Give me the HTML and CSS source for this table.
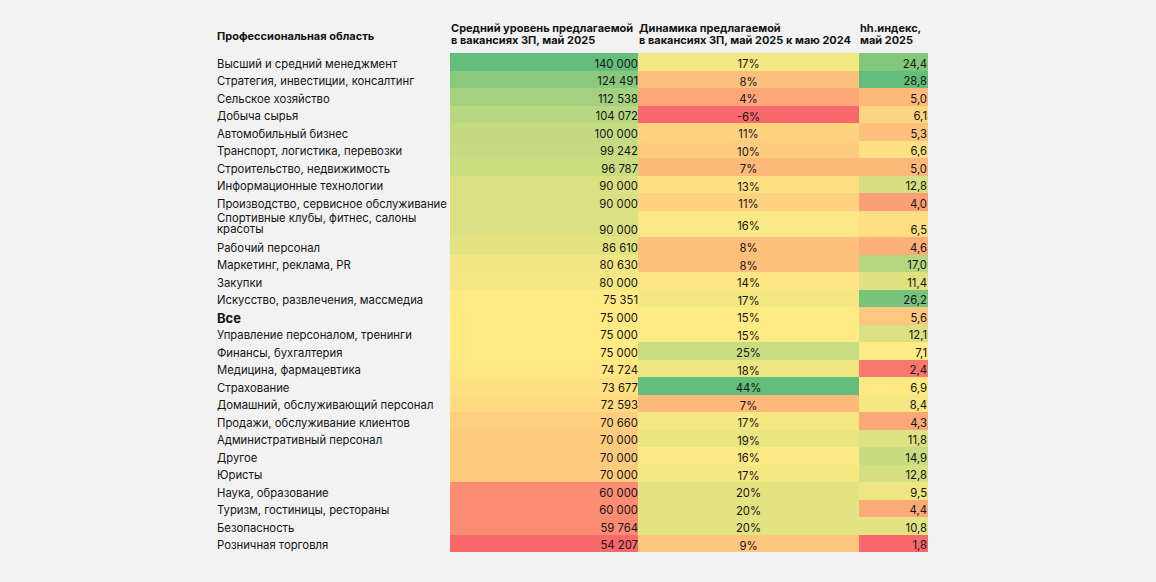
FILE: index.html
```html
<!DOCTYPE html>
<html lang="ru">
<head>
<meta charset="utf-8">
<title>Зарплаты и hh.индекс</title>
<link rel="stylesheet" href="styles.css">
</head>
<body>
<div class="page">
  <div class="table">
    <div class="row head">
      <div class="c name">Профессиональная область</div>
      <div class="c hcol">Средний уровень предлагаемой<br>в вакансиях ЗП, май 2025</div>
      <div class="c hcol">Динамика предлагаемой<br>в вакансиях ЗП, май 2025 к маю 2024</div>
      <div class="c hcol">hh.индекс,<br>май 2025</div>
    </div>

    <div class="row"><div class="c name">Высший и средний менеджмент</div><div class="c sal" style="background:#63BE7B">140 000</div><div class="c dyn" style="background:#F4E883">17%</div><div class="c idx" style="background:#83C77D">24,4</div></div>
    <div class="row"><div class="c name">Стратегия, инвестиции, консалтинг</div><div class="c sal" style="background:#88C97D">124 491</div><div class="c dyn" style="background:#FDC07C">8%</div><div class="c idx" style="background:#63BE7B">28,8</div></div>
    <div class="row"><div class="c name">Сельское хозяйство</div><div class="c sal" style="background:#A5D17F">112 538</div><div class="c dyn" style="background:#FBA777">4%</div><div class="c idx" style="background:#FCB97A">5,0</div></div>
    <div class="row"><div class="c name">Добыча сырья</div><div class="c sal" style="background:#B9D780">104 072</div><div class="c dyn" style="background:#F8696B">-6%</div><div class="c idx" style="background:#FED580">6,1</div></div>
    <div class="row"><div class="c name">Автомобильный бизнес</div><div class="c sal" style="background:#C3DA81">100 000</div><div class="c dyn" style="background:#FED27F">11%</div><div class="c idx" style="background:#FDC17C">5,3</div></div>
    <div class="row"><div class="c name">Транспорт, логистика, перевозки</div><div class="c sal" style="background:#C5DA81">99 242</div><div class="c dyn" style="background:#FDCC7E">10%</div><div class="c idx" style="background:#FEE182">6,6</div></div>
    <div class="row"><div class="c name">Строительство, недвижимость</div><div class="c sal" style="background:#CBDC81">96 787</div><div class="c dyn" style="background:#FCB97A">7%</div><div class="c idx" style="background:#FCB97A">5,0</div></div>
    <div class="row"><div class="c name">Информационные технологии</div><div class="c sal" style="background:#DBE182">90 000</div><div class="c dyn" style="background:#FEDF82">13%</div><div class="c idx" style="background:#D6DF82">12,8</div></div>
    <div class="row"><div class="c name">Производство, сервисное обслуживание</div><div class="c sal" style="background:#DBE182">90 000</div><div class="c dyn" style="background:#FED27F">11%</div><div class="c idx" style="background:#FBA076">4,0</div></div>
    <div class="row tall"><div class="c name">Спортивные клубы, фитнес, салоны красоты</div><div class="c sal" style="background:#DBE182">90 000</div><div class="c dyn" style="background:#FAE984">16%</div><div class="c idx" style="background:#FEDE82">6,5</div></div>
    <div class="row"><div class="c name">Рабочий персонал</div><div class="c sal" style="background:#E4E382">86 610</div><div class="c dyn" style="background:#FDC07C">8%</div><div class="c idx" style="background:#FCAF79">4,6</div></div>
    <div class="row"><div class="c name">Маркетинг, реклама, PR</div><div class="c sal" style="background:#F2E783">80 630</div><div class="c dyn" style="background:#FDC07C">8%</div><div class="c idx" style="background:#B7D680">17,0</div></div>
    <div class="row"><div class="c name">Закупки</div><div class="c sal" style="background:#F3E883">80 000</div><div class="c dyn" style="background:#FFE583">14%</div><div class="c idx" style="background:#E0E282">11,4</div></div>
    <div class="row"><div class="c name">Искусство, развлечения, массмедиа</div><div class="c sal" style="background:#FFEB84">75 351</div><div class="c dyn" style="background:#F4E883">17%</div><div class="c idx" style="background:#76C37C">26,2</div></div>
    <div class="row"><div class="c name total">Все</div><div class="c sal" style="background:#FFEA84">75 000</div><div class="c dyn" style="background:#FFEB84">15%</div><div class="c idx" style="background:#FDC87D">5,6</div></div>
    <div class="row"><div class="c name">Управление персоналом, тренинги</div><div class="c sal" style="background:#FFEA84">75 000</div><div class="c dyn" style="background:#FFEB84">15%</div><div class="c idx" style="background:#DBE082">12,1</div></div>
    <div class="row"><div class="c name">Финансы, бухгалтерия</div><div class="c sal" style="background:#FFEA84">75 000</div><div class="c dyn" style="background:#C9DC81">25%</div><div class="c idx" style="background:#FEEB84">7,1</div></div>
    <div class="row"><div class="c name">Медицина, фармацевтика</div><div class="c sal" style="background:#FFE883">74 724</div><div class="c dyn" style="background:#EFE683">18%</div><div class="c idx" style="background:#F9786E">2,4</div></div>
    <div class="row"><div class="c name">Страхование</div><div class="c sal" style="background:#FEE282">73 677</div><div class="c dyn" style="background:#63BE7B">44%</div><div class="c idx" style="background:#FFE983">6,9</div></div>
    <div class="row"><div class="c name">Домашний, обслуживающий персонал</div><div class="c sal" style="background:#FEDB81">72 593</div><div class="c dyn" style="background:#FCB97A">7%</div><div class="c idx" style="background:#F5E883">8,4</div></div>
    <div class="row"><div class="c name">Продажи, обслуживание клиентов</div><div class="c sal" style="background:#FECF7F">70 660</div><div class="c dyn" style="background:#F4E883">17%</div><div class="c idx" style="background:#FBA877">4,3</div></div>
    <div class="row"><div class="c name">Административный персонал</div><div class="c sal" style="background:#FDCB7E">70 000</div><div class="c dyn" style="background:#EAE583">19%</div><div class="c idx" style="background:#DDE182">11,8</div></div>
    <div class="row"><div class="c name">Другое</div><div class="c sal" style="background:#FDCB7E">70 000</div><div class="c dyn" style="background:#FAE984">16%</div><div class="c idx" style="background:#C7DB81">14,9</div></div>
    <div class="row"><div class="c name">Юристы</div><div class="c sal" style="background:#FDCB7E">70 000</div><div class="c dyn" style="background:#F4E883">17%</div><div class="c idx" style="background:#D6DF82">12,8</div></div>
    <div class="row"><div class="c name">Наука, образование</div><div class="c sal" style="background:#FA8D72">60 000</div><div class="c dyn" style="background:#E4E382">20%</div><div class="c idx" style="background:#EDE683">9,5</div></div>
    <div class="row"><div class="c name">Туризм, гостиницы, рестораны</div><div class="c sal" style="background:#FA8D72">60 000</div><div class="c dyn" style="background:#E4E382">20%</div><div class="c idx" style="background:#FCAA78">4,4</div></div>
    <div class="row"><div class="c name">Безопасность</div><div class="c sal" style="background:#FA8C72">59 764</div><div class="c dyn" style="background:#E4E382">20%</div><div class="c idx" style="background:#E4E382">10,8</div></div>
    <div class="row"><div class="c name">Розничная торговля</div><div class="c sal" style="background:#F8696B">54 207</div><div class="c dyn" style="background:#FDC67D">9%</div><div class="c idx" style="background:#F8696B">1,8</div></div>
  </div>
</div>
</body>
</html>
```

FILE: styles.css
```css
html, body {
  margin: 0;
  padding: 0;
  background: #f2f2f2;
}

.page {
  padding: 20px 0 0 216px;
  font-family: Inter, "Liberation Sans", sans-serif;
  font-size: 11.3px;
  color: #141414;
}

.table {
  width: 712px;
}

.row {
  display: grid;
  grid-template-columns: 234px 188px 221px 69px;
  height: 17.5px;
}

.row.tall {
  height: 26.7px;
}

.row.head {
  height: 33px;
}

.c {
  display: flex;
  min-width: 0;
  line-height: 12px;
  white-space: nowrap;
}

.name {
  padding-left: 1px;
  align-items: flex-end;
  padding-bottom: 1px;
}

.tall .name {
  white-space: normal;
  line-height: 11px;
  padding-bottom: 2.5px;
}

.total {
  font-weight: 700;
  font-size: 13px;
}

.sal, .idx {
  justify-content: flex-end;
  align-items: flex-end;
  padding-bottom: 1px;
}

.idx {
  padding-right: 1px;
}

.dyn {
  justify-content: center;
  align-items: center;
  padding-top: 4.5px;
}

.head .c {
  font-size: 11px;
  font-weight: 700;
  white-space: nowrap;
}

.head .name {
  align-items: center;
  padding-top: 0;
  padding-bottom: 2px;
}

.head .hcol {
  display: block;
  padding: 2px 0 0 1px;
  line-height: 12.3px;
}
```
